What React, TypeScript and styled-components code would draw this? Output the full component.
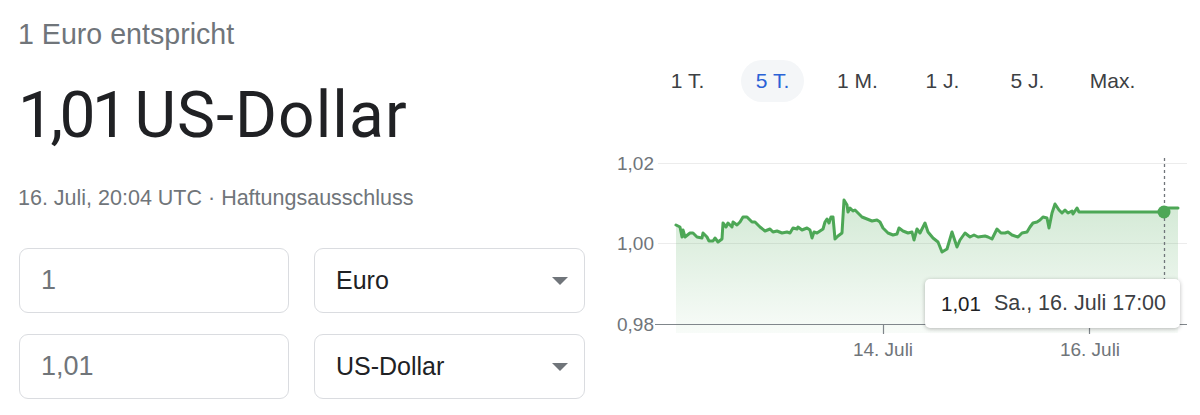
import React from "react";
import styled, { createGlobalStyle } from "styled-components";

const GlobalStyle = createGlobalStyle`
  html, body { margin: 0; padding: 0; background: #ffffff; }
  body { font-family: "Liberation Sans", Arial, sans-serif; }
  * { box-sizing: border-box; }
`;

const Page = styled.div`
  display: flex;
  width: 1200px;
  height: 415px;
  overflow: hidden;
`;

const LeftColumn = styled.div`
  width: 600px;
  padding: 18px 0 0 18px;
  display: flex;
  flex-direction: column;
`;

const Subtitle = styled.div`
  font-size: 28.6px;
  line-height: 32px;
  color: #70757a;
  white-space: nowrap;
`;

const BigValue = styled.div`
  margin-top: 30px;
  font-family: Roboto, "Liberation Sans", sans-serif;
  font-size: 64px;
  line-height: 72px;
  color: #202124;
  white-space: nowrap;
  display: flex;
  gap: 10px;
`;

const Amount = styled.span`
  letter-spacing: -3.5px;
`;

const Unit = styled.span`
  letter-spacing: 1.1px;
`;

const MetaLine = styled.div`
  margin-top: 34px;
  font-size: 21.5px;
  line-height: 24px;
  color: #70757a;
  white-space: nowrap;
`;

const FieldGrid = styled.div`
  margin-top: 38px;
  margin-left: 1px;
  display: grid;
  grid-template-columns: 270px 271px;
  column-gap: 25px;
  row-gap: 21px;
`;

const Field = styled.div<{ $select?: boolean }>`
  height: 65px;
  border: 1px solid #dadce0;
  border-radius: 9px;
  display: flex;
  align-items: center;
  justify-content: space-between;
  padding: 0 16px 0 21px;
  font-size: ${(p) => (p.$select ? "25px" : "27px")};
  color: ${(p) => (p.$select ? "#202124" : "#70757a")};
`;

const Caret = styled.span`
  width: 0;
  height: 0;
  border-left: 8px solid transparent;
  border-right: 8px solid transparent;
  border-top: 8px solid #70757a;
  margin-top: 1px;
`;

const RightColumn = styled.div`
  flex: 1;
  padding-top: 60px;
  display: flex;
  flex-direction: column;
`;

const Tabs = styled.div`
  display: flex;
  gap: 22px;
  margin-left: 56px;
`;

const Tab = styled.div<{ $active?: boolean }>`
  width: 63px;
  height: 42px;
  border-radius: 21px;
  display: flex;
  align-items: center;
  justify-content: center;
  font-size: 21px;
  white-space: nowrap;
  color: ${(p) => (p.$active ? "#2a62d6" : "#3c4043")};
  background: ${(p) => (p.$active ? "#f4f6f8" : "transparent")};
`;

const ChartWrap = styled.div`
  position: relative;
  margin-top: 38px;
  width: 600px;
  height: 230px;
`;

const ChartSvg = styled.svg`
  display: block;
  font-family: "Liberation Sans", Arial, sans-serif;
`;

const Tooltip = styled.div`
  position: absolute;
  left: 325px;
  top: 139px;
  width: 255px;
  height: 49px;
  background: #ffffff;
  border-radius: 5px;
  box-shadow: 0 1px 4px rgba(0, 0, 0, 0.28);
  display: flex;
  align-items: center;
  gap: 13px;
  padding-left: 16px;
  white-space: nowrap;
`;

const TipValue = styled.span`
  font-size: 20.5px;
  color: #202124;
`;

const TipDate = styled.span`
  font-size: 21.5px;
  color: #3c4043;
`;

const points: [number, number][] = [
  [676, 225], [680, 227], [682, 237], [683, 230], [685, 237], [690, 233], [693, 233], [697, 237],
  [702, 238], [703, 233], [707, 237], [709, 241], [713, 241], [715, 238], [718, 242], [722, 239],
  [723, 223], [726, 227], [728, 223], [732, 227], [733, 222], [737, 225], [740, 222], [743, 217],
  [747, 217], [752, 222], [755, 222], [760, 227], [765, 231], [770, 229], [773, 232], [777, 231],
  [782, 233], [787, 232], [790, 233], [793, 228], [797, 229], [798, 227], [802, 230], [807, 228],
  [810, 230], [812, 238], [814, 232], [817, 233], [820, 231], [823, 229], [825, 222], [827, 219],
  [829, 223], [831, 217], [833, 217], [835, 239], [838, 236], [842, 233], [844, 200], [847, 205],
  [848, 212], [850, 208], [853, 211], [855, 210], [858, 213], [862, 217], [867, 219], [872, 221],
  [877, 220], [880, 222], [883, 228], [888, 233], [893, 235], [897, 234], [899, 228], [903, 231],
  [908, 233], [912, 232], [914, 240], [917, 229], [920, 233], [925, 223], [928, 232], [933, 238],
  [938, 242], [942, 252], [947, 249], [952, 232], [957, 247], [960, 240], [965, 233], [970, 237],
  [974, 235], [978, 237], [985, 236], [988, 237], [992, 239], [997, 229], [1001, 233], [1005, 233],
  [1008, 232], [1012, 235], [1018, 237], [1022, 233], [1027, 232], [1030, 227], [1033, 223],
  [1037, 222], [1040, 220], [1043, 217], [1047, 218], [1049, 228], [1052, 213], [1055, 204],
  [1059, 210], [1062, 213], [1065, 210], [1068, 213], [1072, 211], [1073, 214], [1077, 208],
  [1079, 212], [1164, 212], [1167, 208], [1178, 208],
];

const linePath = points.map(([x, y], i) => `${i === 0 ? "M" : "L"}${x},${y}`).join(" ");
const areaPath = `M676,333 ${points.map(([x, y]) => `L${x},${y}`).join(" ")} L1178,333 Z`;

const tabs = ["1 T.", "5 T.", "1 M.", "1 J.", "5 J.", "Max."];

function Chart() {
  return (
    <ChartSvg width={600} height={230} viewBox="600 140 600 230">
      <defs>
        <linearGradient id="area" x1="0" y1="195" x2="0" y2="333" gradientUnits="userSpaceOnUse">
          <stop offset="0" stopColor="#4da756" stopOpacity="0.26" />
          <stop offset="1" stopColor="#4da756" stopOpacity="0.04" />
        </linearGradient>
      </defs>
      <line x1={658} y1={163.5} x2={1187} y2={163.5} stroke="#ececec" strokeWidth={1} />
      <line x1={658} y1={243.5} x2={1187} y2={243.5} stroke="#ececec" strokeWidth={1} />
      <text x={654} y={170} textAnchor="end" fontSize={19} fill="#70757a">1,02</text>
      <text x={654} y={250} textAnchor="end" fontSize={19} fill="#70757a">1,00</text>
      <text x={654} y={331} textAnchor="end" fontSize={19} fill="#70757a">0,98</text>
      <path d={areaPath} fill="url(#area)" />
      <line x1={1164.5} y1={158} x2={1164.5} y2={325} stroke="#70757a" strokeWidth={1.3} strokeDasharray="3 3" />
      <path d={linePath} fill="none" stroke="#4da756" strokeWidth={3} strokeLinejoin="round" strokeLinecap="round" />
      <circle cx={1164} cy={212} r={6.5} fill="#4da756" />
      <line x1={655} y1={324.5} x2={1187} y2={324.5} stroke="#80868b" strokeWidth={1} />
      <line x1={883.5} y1={325} x2={883.5} y2={334} stroke="#80868b" strokeWidth={1.2} />
      <line x1={1089.5} y1={325} x2={1089.5} y2={334} stroke="#80868b" strokeWidth={1.2} />
      <text x={883} y={356} textAnchor="middle" fontSize={19} fill="#70757a">14. Juli</text>
      <text x={1090} y={356} textAnchor="middle" fontSize={19} fill="#70757a">16. Juli</text>
    </ChartSvg>
  );
}

export default function App() {
  return (
    <>
      <GlobalStyle />
      <Page>
        <LeftColumn>
          <Subtitle>1 Euro entspricht</Subtitle>
          <BigValue>
            <Amount>1,01</Amount>
            <Unit>US-Dollar</Unit>
          </BigValue>
          <MetaLine>16. Juli, 20:04 UTC · Haftungsausschluss</MetaLine>
          <FieldGrid>
            <Field>1</Field>
            <Field $select>
              Euro
              <Caret />
            </Field>
            <Field>1,01</Field>
            <Field $select>
              US-Dollar
              <Caret />
            </Field>
          </FieldGrid>
        </LeftColumn>
        <RightColumn>
          <Tabs>
            {tabs.map((t) => (
              <Tab key={t} $active={t === "5 T."}>
                {t}
              </Tab>
            ))}
          </Tabs>
          <ChartWrap>
            <Chart />
            <Tooltip>
              <TipValue>1,01</TipValue>
              <TipDate>Sa., 16. Juli 17:00</TipDate>
            </Tooltip>
          </ChartWrap>
        </RightColumn>
      </Page>
    </>
  );
}
